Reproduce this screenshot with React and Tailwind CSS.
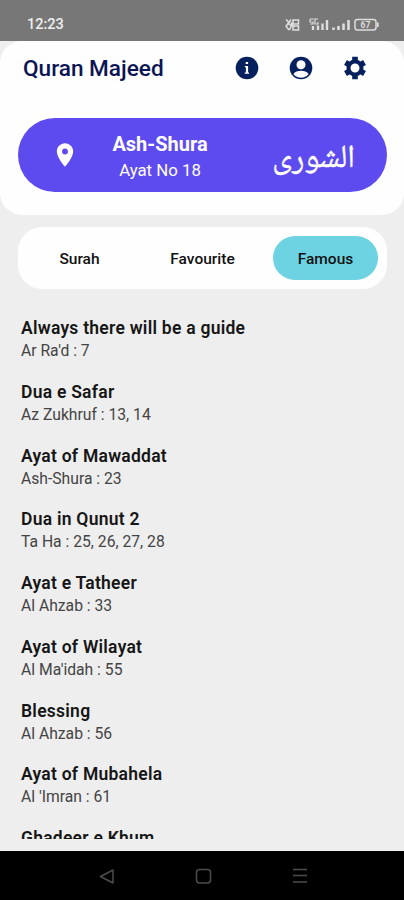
import React, { useState } from 'react'
import { MdLocationOn } from 'react-icons/md'

const tabs = ["Surah", "Favourite", "Famous"]

const ayats = [
  { title: "Always there will be a guide", verse: "Ar Ra'd : 7" },
  { title: "Dua e Safar", verse: "Az Zukhruf : 13, 14" },
  { title: "Ayat of Mawaddat", verse: "Ash-Shura : 23" },
  { title: "Dua in Qunut 2", verse: "Ta Ha : 25, 26, 27, 28" },
  { title: "Ayat e Tatheer", verse: "Al Ahzab : 33" },
  { title: "Ayat of Wilayat", verse: "Al Ma'idah : 55" },
  { title: "Blessing", verse: "Al Ahzab : 56" },
  { title: "Ayat of Mubahela", verse: "Al 'Imran : 61" },
  { title: "Ghadeer e Khum", verse: "" },
]

const StatusBar = () => {
  return (
    <div className="h-[41px] shrink-0 bg-[#777777] flex items-center justify-between pl-[27px] pr-[25px] pt-2">
      <div className="text-[14.500px] font-medium text-[#eeeeee]">12:23</div>
      <svg width="94" height="14" viewBox="0 0 94 14" fill="none" stroke="#dddddd">
        {/* vibrate and data rate */}
        <path d="M1 1.500l3 3-3 3.500 3 4M6 1.500l-3 4 3.500 2-2 4.500M8 2h5.500v4H8zM8 8h5.500v4H8zM6 4.500l3 5" strokeWidth="1.600" />
        {/* signal bars */}
        <path d="M25 1h4M25 1v3h3v2h-3M33 1h-3v5h3V4" strokeWidth="1.2" />
        <path d="M28 12V8M33 12V7.500M37.500 12V5.500M42 12V2" strokeWidth="2.4" />
        <path d="M48.500 12V9.500M53.500 12V8M58.500 12V5.500M63.500 12V2" strokeWidth="2.600" />
        {/* battery */}
        <rect x="70" y="1.500" width="21" height="10.500" rx="2.500" strokeWidth="1.500" />
        <path d="M92.800 4.500v4.500" strokeWidth="1.800" />
        <text x="80.500" y="9.800" textAnchor="middle" fontSize="8.500" fontWeight="700" fill="#dddddd" stroke="none">67</text>
      </svg>
    </div>
  )
}

const InfoIcon = () => (
  <svg width="24" height="24" viewBox="0 0 24 24">
    <circle cx="12" cy="12" r="11.300" fill="#06205e" />
    <path d="M10.700 6h2.400v2.100h-2.400zM9.900 10h3.200v6.500h1v1.300H9.700v-1.300h1.200v-5.200h-1z" fill="#fefefe" />
  </svg>
)

const AccountIcon = () => (
  <svg width="24" height="24" viewBox="0 0 24 24">
    <circle cx="12" cy="12" r="11.300" fill="#06205e" />
    <circle cx="12" cy="8.800" r="4.500" fill="#fefefe" />
    <path d="M4.400 18C6 15.700 8.800 14.700 12 14.700s6 1 7.600 3.300A9.700 9.700 0 0 1 12 21.800a9.700 9.700 0 0 1-7.600-3.800z" fill="#fefefe" />
  </svg>
)

const SettingsIcon = () => (
  <svg width="24" height="24" viewBox="0 0 24 24" fill="none" stroke="#06205e">
    <circle cx="12" cy="12" r="6.500" strokeWidth="4" />
    <path d="M12 .8v4.500M12 18.700v4.500M2.500 6.500l3.700 2.150M17.800 15.350l3.700 2.150M2.500 17.500l3.700-2.150M17.800 8.650l3.700-2.150" strokeWidth="5.600" />
  </svg>
)

const Header = () => {
  return (
    <div className="h-[174px] shrink-0 bg-[#fefefe] rounded-[22px] pl-[18px] pr-[17px]">
      <div className="h-[55px] flex items-center justify-between pl-[5px] pr-[20px]">
        <h1 className="text-[22.600px] font-medium text-[#0b1555] pt-px">Quran Majeed</h1>
        <div className="flex gap-[30px] pb-px">
          <button type="button" aria-label="Info"><InfoIcon /></button>
          <button type="button" aria-label="Account"><AccountIcon /></button>
          <button type="button" aria-label="Settings"><SettingsIcon /></button>
        </div>
      </div>

      <div className="h-[74px] mt-[22px] rounded-[37px] bg-[#5e4bef] text-white flex items-center">
        <MdLocationOn className="ml-[33px] text-[28px]" />
        <div className="w-[134px] ml-[14px] pt-[3px] text-center">
          <div className="text-[20px] leading-[26px] font-bold">Ash-Shura</div>
          <div className="text-[16.800px] leading-[26px]">Ayat No 18</div>
        </div>
        <div className="ml-auto mr-[32px] pt-[9px] text-[32px] leading-none font-['Noto_Naskh_Arabic','DejaVu_Sans',serif] [-webkit-text-stroke:0.4px_white]" lang="ar" dir="rtl">الشورى</div>
      </div>
    </div>
  )
}

const Tabs = ({ active, setActive }) => {
  return (
    <div className="h-[62px] shrink-0 mt-3 ml-[18px] mr-[17px] rounded-[24px] bg-[#fefefe] grid grid-cols-3 items-center justify-items-center">
      {tabs.map((tab) => (
        <button
          key={tab}
          type="button"
          onClick={() => setActive(tab)}
          className={`w-[105px] h-11 pt-[3px] rounded-full text-[15.500px] font-medium text-[#111111] ${active === tab ? "bg-[#6dd3e2]" : ""}`}
        >
          {tab}
        </button>
      ))}
    </div>
  )
}

const NavigationBar = () => {
  return (
    <div className="h-[49px] shrink-0 bg-black">
      <svg width="404" height="49" viewBox="0 0 404 49" fill="none" stroke="#4c4c4c" strokeWidth="1.500">
        <path d="M113 19v13l-12.500-6.500z" strokeLinejoin="round" />
        <rect x="196.500" y="18.500" width="14" height="13.500" rx="3" />
        <path d="M293 18.500h14M293 24.500h14M293 31h14" />
      </svg>
    </div>
  )
}

const App = () => {
  const [active, setActive] = useState("Famous")

  return (
    <div className="w-[404px] h-[900px] bg-[#eeeeee] flex flex-col overflow-hidden font-[Roboto,sans-serif]">
      <StatusBar />
      <Header />
      <Tabs active={active} setActive={setActive} />
      <div className="flex-1 min-h-0 mt-[27px] mb-3 pl-[21px] overflow-hidden">
        {ayats.map((ayat) => (
          <div key={ayat.title} className="h-[63.750px]">
            <div className="text-[17.500px] leading-[24px] font-semibold tracking-[0.25px] text-[#161616]">{ayat.title}</div>
            <div className="text-[15.700px] leading-[22px] text-[#444444]">{ayat.verse}</div>
          </div>
        ))}
      </div>
      <NavigationBar />
    </div>
  )
}

export default App
